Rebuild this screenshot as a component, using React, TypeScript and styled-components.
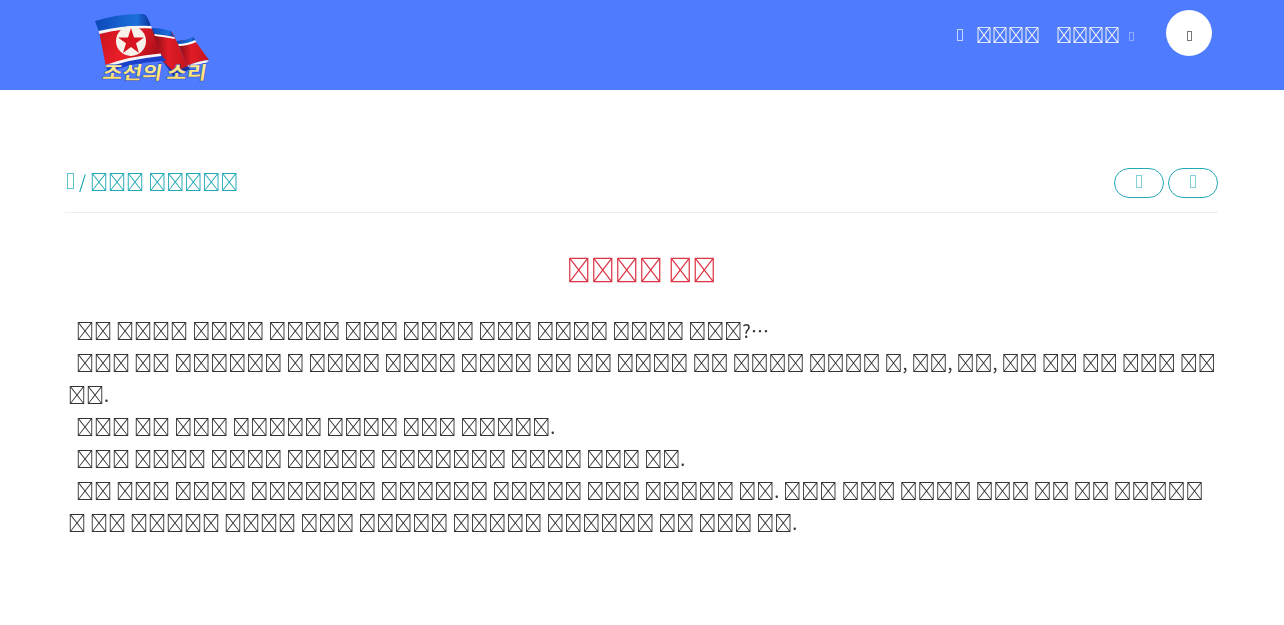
import React from "react";
import styled, { createGlobalStyle } from "styled-components";

// The site text is in private-use codepoints (custom font on the real page),
// so it shows as the missing-glyph box. "#" stands for one such character.
const pua = (s: string) => s.replace(/#/g, "\uE000");

const lines = [
  "## #### #### #### ### #### ### #### #### ###?…",
  "### ## ###### # #### #### #### ## ## #### ## #### #### #, ##, ##, ## ## ## ### ## ##.",
  "### ## ### ##### #### ### #####.",
  "### #### #### ##### ####### #### ### ##.",
  "## ### #### ####### ###### ##### ### ##### ##. ### ### #### ### ## ## ##### # ## ##### #### ### ##### ##### ###### ## ### ##.",
];

const teal = "#22a9b6";

const Global = createGlobalStyle`
  html, body { margin: 0; padding: 0; background: #fff; }
  body { font-family: "Noto Sans CJK KR", sans-serif; color: #333; }
`;

// the reference text has grey edges, no colour fringes
const Page = styled.div`
  opacity: 0.999;
`;

const Header = styled.header`
  height: 90px;
  background: #4f7bff;
  display: flex;
  align-items: flex-start;
  padding: 0 72px 0 90px;
`;

const Logo = styled.svg`
  width: 125px;
  height: 78px;
  margin-top: 8px;
  flex: none;
`;

const Nav = styled.nav`
  margin-left: auto;
  display: flex;
  align-items: flex-start;
  color: #fff;
  font-size: 16px;
`;

const NavLink = styled.a`
  line-height: 24px;
  margin-top: 22px;
  margin-left: 16px;
`;

// Icon webfont is missing in the reference: a thin narrow box stands where the glyph was.
const MissingIcon = styled.span<{ $w: number; $h: number; $color: string }>`
  display: inline-block;
  flex: none;
  width: ${(p) => p.$w}px;
  height: ${(p) => p.$h}px;
  border: 1px solid ${(p) => p.$color};
  box-sizing: border-box;
`;

const NavIcon = styled(MissingIcon)`
  margin-top: 29px;
  margin-right: -3px;
`;

const CaretIcon = styled(MissingIcon)`
  margin: 32px 0 0 9px;
`;

const SearchButton = styled.button`
  width: 46px;
  height: 46px;
  margin: 10px 0 0 32px;
  border: 0;
  padding: 5px 0 0;
  border-radius: 50%;
  background: #fff;
  display: flex;
  align-items: center;
  justify-content: center;
`;

const Main = styled.main`
  padding: 0 66px 0 65px;
`;

const Crumbs = styled.div`
  margin-top: 78px;
  padding-bottom: 14px;
  border-bottom: 1px solid #ececec;
  display: flex;
  justify-content: space-between;
  align-items: flex-start;
  color: ${teal};
  font-size: 18px;
  line-height: 26px;
`;

const CrumbPath = styled.div`
  display: flex;
  align-items: flex-start;
  white-space: pre;
`;

const HomeIcon = styled(MissingIcon)`
  margin: 5px 1px 0 2px;
`;

const Pager = styled.div`
  display: flex;
  gap: 4px;
`;

const PagerButton = styled.button`
  width: 50px;
  height: 30px;
  padding: 0 0 4px;
  border: 1px solid ${teal};
  border-radius: 15px;
  background: transparent;
  display: flex;
  align-items: center;
  justify-content: center;
`;

const Title = styled.h1`
  margin: 38px 0 27px;
  text-align: center;
  color: #dc3545;
  font-size: 24px;
  font-weight: 400;
  line-height: 36px;
`;

const Article = styled.div`
  padding-left: 3px;
  font-size: 18px;
  line-height: 32px;
`;

const Para = styled.p`
  margin: 0;
`;

const LogoText = styled.text`
  font-family: "Noto Sans CJK KR", sans-serif;
  font-weight: 700;
  font-size: 18px;
  fill: url(#gold);
  stroke: #2a50c8;
  stroke-width: 1.2px;
  paint-order: stroke;
`;

const FlagLogo = () => (
  <Logo viewBox="0 0 125 78">
    <defs>
      <linearGradient id="red" x1="0" y1="0" x2="1" y2="0.3">
        <stop offset="0" stopColor="#c8141e" />
        <stop offset="0.55" stopColor="#ec1e28" />
        <stop offset="1" stopColor="#b0101c" />
      </linearGradient>
      <linearGradient id="redFold" x1="0" y1="0" x2="1" y2="0">
        <stop offset="0" stopColor="#7c0a14" />
        <stop offset="0.45" stopColor="#e01c26" />
        <stop offset="1" stopColor="#c4141e" />
      </linearGradient>
      <linearGradient id="blue" x1="0" y1="0" x2="1" y2="0">
        <stop offset="0" stopColor="#0c48b8" />
        <stop offset="0.75" stopColor="#1c70dc" />
        <stop offset="1" stopColor="#0c3098" />
      </linearGradient>
      <linearGradient id="gold" x1="0" y1="0" x2="0" y2="1">
        <stop offset="0" stopColor="#fff8a8" />
        <stop offset="1" stopColor="#ffd45c" />
      </linearGradient>
    </defs>
    {/* far panel */}
    <path d="M87 33 Q95 33 103 30 L119 52 Q108 53 97 58 Z" fill="url(#redFold)" />
    <path d="M86 33 Q95 33 103 29 L106 33 Q96 37 89 37 Z" fill="url(#blue)" />
    <path d="M88 36 Q97 36 105 32 L106.5 34 Q97 38 89 38 Z" fill="#fff" />
    <path d="M97 58 Q108 53 119 52 L116 55 Q106 56 99 60 Z" fill="#f2f2f2" />
    {/* middle panel */}
    <path d="M62 21 Q72 21 82 24 L88 36 L98 60 L84 66 L66 46 Z" fill="url(#redFold)" />
    <path d="M62 20 Q72 20 81 23 L84 29 Q73 27 64 26 Z" fill="url(#blue)" />
    <path d="M64 26 Q74 27 84 29 L85 31 Q74 29 65 28 Z" fill="#fff" />
    <path d="M72 52 L84 64 L98 58 L100 61 L84 69 Z" fill="#16349c" />
    {/* main panel */}
    <path d="M9 23 Q35 18 61 19 L71 47 Q40 50 16 59 Z" fill="url(#red)" />
    <path d="M5 13 Q30 5 54 6 Q58 8 61 19 Q35 17 9 24 Z" fill="url(#blue)" />
    <path d="M8.5 23 Q35 17 61 18 L62 20.5 Q35 19.5 9.5 26 Z" fill="#f6f6f6" />
    <path d="M16 59 Q40 50 71 46.5 L76 53 Q40 54 18 65 Z" fill="#1a3fc8" />
    <path d="M15.5 57 Q40 48 70.5 45.5 L71.5 48 Q40 51 16 60 Z" fill="#f6f6f6" />
    <circle cx="41" cy="33" r="15" fill="#f8f3ea" />
    <path
      d="M41 20 L44 29.5 L54 29.5 L46 35.3 L49 45 L41 39 L33 45 L36 35.3 L28 29.5 L38 29.5 Z"
      fill="#d8141f"
    />
    <LogoText
      x="2"
      y="71"
      textLength="104"
      lengthAdjust="spacingAndGlyphs"
      transform="skewX(-9) translate(21 0)"
    >
      조선의 소리
    </LogoText>
  </Logo>
);

export default function App() {
  return (
    <Page>
      <Global />
      <Header>
        <FlagLogo />
        <Nav>
          <NavIcon $w={6} $h={12} $color="#c4d4ff" />
          <NavLink>{pua("####")}</NavLink>
          <NavLink>{pua("####")}</NavLink>
          <CaretIcon $w={5} $h={9} $color="#8fabff" />
          <SearchButton>
            <MissingIcon $w={5} $h={10} $color="#777" />
          </SearchButton>
        </Nav>
      </Header>
      <Main>
        <Crumbs>
          <CrumbPath>
            <HomeIcon $w={7} $h={16} $color="#5cc4cc" />
            {pua(" / ### #####")}
          </CrumbPath>
          <Pager>
            <PagerButton>
              <MissingIcon $w={6} $h={13} $color="#80d0d6" />
            </PagerButton>
            <PagerButton>
              <MissingIcon $w={6} $h={13} $color="#80d0d6" />
            </PagerButton>
          </Pager>
        </Crumbs>
        <Title>{pua("#### ##")}</Title>
        <Article>
          {lines.map((line, i) => (
            <Para key={i}>
              {"\u00A0\u00A0"}
              {pua(line)}
            </Para>
          ))}
        </Article>
      </Main>
    </Page>
  );
}
